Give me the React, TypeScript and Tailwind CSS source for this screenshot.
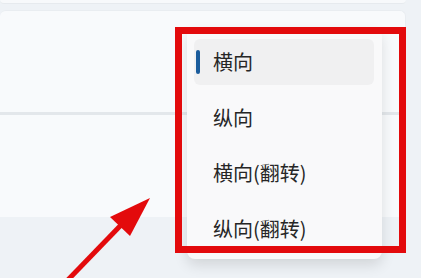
const items = ['横向', '纵向', '横向(翻转)', '纵向(翻转)'];

export default function App() {
  return (
    <div
      className="relative w-[421px] h-[278px] overflow-hidden bg-[#eef2f6]"
      style={{ fontFamily: '"Noto Sans CJK SC", "Noto Sans", sans-serif' }}
    >
      {/* settings cards behind the menu */}
      <div className="flex flex-col w-[406px]">
        <div className="h-[4px] bg-[#f7f9fb] border-b border-[#e6eaee] rounded-b-md" />
        <div className="mt-[6px] rounded-t-md bg-[#f8fafc] border-t border-r border-[#e9edf1]">
          <div className="h-[101px]" />
          <div className="h-[3px] bg-[#e3e7eb]" />
          <div className="h-[102px]" />
        </div>
      </div>

      {/* dropdown menu */}
      <div className="absolute left-[187px] top-[28px] w-[195px] h-[231px] rounded-lg bg-[#f9f9fa] shadow-[0_6px_14px_rgba(0,0,0,0.12)]">
        <div className="flex flex-col gap-[9.5px] pt-[11px] pl-[7px] pr-[8px]">
          {items.map((label, i) => (
            <div
              key={label}
              className={`relative flex items-center h-[46px] pl-[19px] rounded-md text-[20px] text-[#262626] ${
                i === 0 ? 'bg-[#f0f0f1]' : ''
              }`}
            >
              {i === 0 && (
                <span className="absolute left-[2px] top-[11px] w-[4px] h-[24px] rounded-full bg-[#1a5c9c]" />
              )}
              {label}
            </div>
          ))}
        </div>
      </div>

      {/* red annotation box */}
      <div className="absolute left-[175px] top-[27px] w-[231px] h-[226px] border-[7px] border-[#e30a0c]" />

      {/* red arrow */}
      <svg className="absolute left-0 top-0" width="421" height="278" viewBox="0 0 421 278">
        <line x1="64" y1="284" x2="122" y2="224" stroke="#e30a0c" strokeWidth="5" />
        <polygon points="150,198 110,217 130,236" fill="#e30a0c" />
      </svg>
    </div>
  );
}
